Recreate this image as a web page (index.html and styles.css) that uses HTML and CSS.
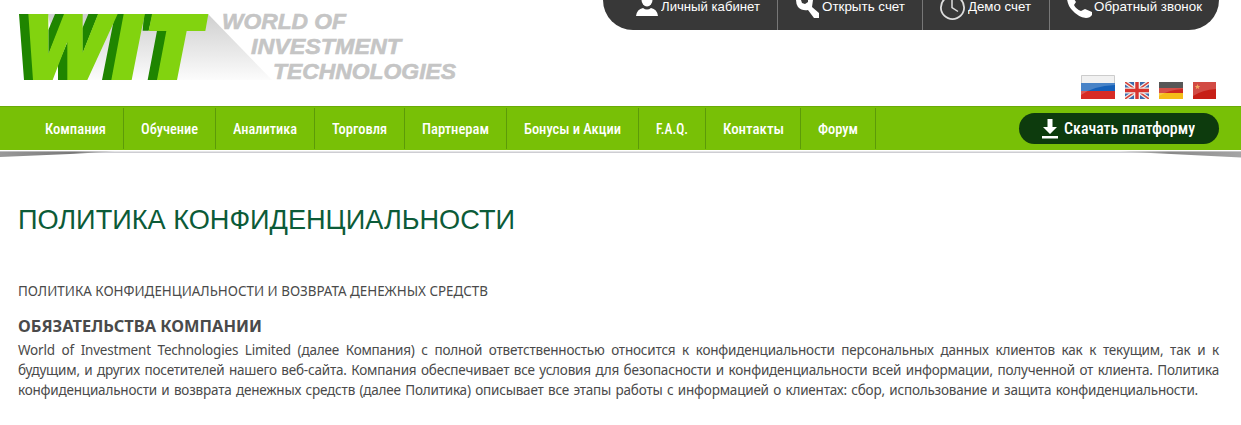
FILE: index.html
```html
<!DOCTYPE html>
<html lang="ru">
<head>
    <meta charset="UTF-8">
    <meta name="viewport" content="width=device-width, initial-scale=1.0">
    <title>World of Investment Technologies</title>
    <link rel="stylesheet" href="styles.css">
</head>
<body>

    <header class="header">
        <svg class="logo" width="460" height="90" viewBox="0 0 460 90">
            <defs>
                <linearGradient id="shade" x1="0" y1="0" x2="0" y2="1">
                    <stop offset="0" stop-color="#cfcfcf"/>
                    <stop offset="1" stop-color="#fcfcfc"/>
                </linearGradient>
            </defs>
            <path fill="url(#shade)" d="M48 14H208L272 80H60Z"/>
            <g transform="scale(.33333)">
                <path fill="#1f8500" d="M57 42H90L104 240H72ZM165 42H195L145 165V90ZM174 240H204V122L174 192ZM265 42H295L247 162V85ZM345 42H376L336 240H306ZM432 42H458L446 92H428ZM471 92H502L473 240H443Z"/>
                <path fill="#82d30f" d="M85 42H145V162L192 42H248V158L294 42H353L262 240H202V125L158 240H99ZM371 42H435L424 92L395 240H334ZM456 42H625L616 93H560L531 240H471L499 93H446Z"/>
            </g>
            <g class="slogan">
                <text x="222" y="28.800" textLength="124" lengthAdjust="spacingAndGlyphs">WORLD OF</text>
                <text x="251" y="53.800" textLength="150" lengthAdjust="spacingAndGlyphs">INVESTMENT</text>
                <text x="273" y="78.800" textLength="183" lengthAdjust="spacingAndGlyphs">TECHNOLOGIES</text>
            </g>
        </svg>

        <div class="header-right">
            <div class="topbar">
                <a class="cabinet">
                    <svg width="22" height="20" viewBox="0 0 22 20"><ellipse cx="11" cy="0" rx="5.500" ry="6.500" fill="#fff"/><path fill="#fff" d="M0 16Q1 9 7 8Q11 11 15 8Q21 9 22 16Z"/></svg>
                    <svg class="label" width="100" height="20"><text x="0" y="11" textLength="99" lengthAdjust="spacingAndGlyphs">Личный кабинет</text></svg>
                </a>
                <a class="account">
                    <svg width="24" height="20" viewBox="0 0 24 20"><path fill="#fff" d="M0 0H5L6 3L9 4L12 2V0H17L16 7L23 13V18H18L12 10Q6 11 2 7Q0 4 0 0Z"/></svg>
                    <svg class="label" width="84" height="20"><text x="0" y="11" textLength="83" lengthAdjust="spacingAndGlyphs">Открыть счет</text></svg>
                </a>
                <a class="demo">
                    <svg width="26" height="20" viewBox="0 0 26 20"><circle cx="12.500" cy="7.500" r="11.600" fill="none" stroke="#ddd" stroke-width="1.800"/><path fill="none" stroke="#ddd" stroke-width="1.500" d="M12 0V7.500L18 11.500"/></svg>
                    <svg class="label" width="64" height="20"><text x="0" y="11" textLength="63" lengthAdjust="spacingAndGlyphs">Демо счет</text></svg>
                </a>
                <a class="call">
                    <svg width="25" height="20" viewBox="0 0 25 20"><path fill="#fff" d="M0 -1H7L9 2L7 5Q9 9 14 11L18 9L25 12V15Q23 18 19 18Q11 17 5 10Q1 6 0 -1Z"/></svg>
                    <svg class="label" width="109" height="20"><text x="0" y="11" textLength="108" lengthAdjust="spacingAndGlyphs">Обратный звонок</text></svg>
                </a>
            </div>
            <div class="flags">
                <svg width="34" height="24" viewBox="0 0 34 24"><path fill="#eee" d="M0 0H34V8H0Z"/><path fill="#1560b8" d="M0 8H34V16H0Z"/><path fill="#d72b25" d="M0 16H34V24H0Z"/><path fill="#fff" opacity=".22" d="M0 0H34V10Q12 11 0 20Z"/><path fill="none" stroke="#ccc" d="M.5 8V.5H33.500V8"/></svg>
                <svg width="24" height="17" viewBox="0 0 24 17"><path fill="#3d6aac" d="M0 0H24V17H0Z"/><path stroke="#eee" stroke-width="4" d="M0 0L24 17M24 0L0 17"/><path stroke="#d8453c" stroke-width="1.500" d="M0 0L24 17M24 0L0 17"/><path stroke="#eee" stroke-width="6" d="M12 0V17M0 8.500H24"/><path stroke="#d8352f" stroke-width="3.400" d="M12 0V17M0 8.500H24"/></svg>
                <svg width="24" height="17" viewBox="0 0 24 17"><path fill="#333" d="M0 0H24V6H0Z"/><path fill="#ce2920" d="M0 6H24V11H0Z"/><path fill="#f5bd18" d="M0 11H24V17H0Z"/><path fill="#fff" opacity=".18" d="M0 0H24V7Q9 8 0 14Z"/></svg>
                <svg width="23" height="17" viewBox="0 0 23 17"><path fill="#c71f16" d="M0 0H23V17H0Z"/><path fill="#fff" opacity=".2" d="M0 0H23V7Q9 8 0 14Z"/><path fill="#f0a860" d="M4.500 2L5.300 4H7.300L5.700 5.300L6.300 7.300L4.500 6L2.700 7.300L3.300 5.300L1.700 4H3.700Z"/></svg>
            </div>
        </div>
    </header>

    <nav class="nav">
        <ul class="menu">
            <li><svg width="61" height="24"><text x="0" y="17" textLength="61" lengthAdjust="spacingAndGlyphs">Компания</text></svg></li>
            <li><svg width="58" height="24"><text x="0" y="17" textLength="57" lengthAdjust="spacingAndGlyphs">Обучение</text></svg></li>
            <li><svg width="65" height="24"><text x="0" y="17" textLength="64" lengthAdjust="spacingAndGlyphs">Аналитика</text></svg></li>
            <li><svg width="56" height="24"><text x="0" y="17" textLength="55" lengthAdjust="spacingAndGlyphs">Торговля</text></svg></li>
            <li><svg width="68" height="24"><text x="0" y="17" textLength="67" lengthAdjust="spacingAndGlyphs">Партнерам</text></svg></li>
            <li><svg width="98" height="24"><text x="0" y="17" textLength="97" lengthAdjust="spacingAndGlyphs">Бонусы и Акции</text></svg></li>
            <li><svg width="33" height="24"><text x="0" y="17" textLength="32" lengthAdjust="spacingAndGlyphs">F.A.Q.</text></svg></li>
            <li><svg width="61" height="24"><text x="0" y="17" textLength="61" lengthAdjust="spacingAndGlyphs">Контакты</text></svg></li>
            <li><svg width="41" height="24"><text x="0" y="17" textLength="40" lengthAdjust="spacingAndGlyphs">Форум</text></svg></li>
        </ul>
        <a class="download">
            <svg width="16" height="20" viewBox="0 0 16 20"><path fill="#fff" d="M5.500 0H10.500V8H15L8 15L1 8H5.500ZM0 17H16V19.500H0Z"/></svg>
            <svg width="131" height="24"><text class="download-text" x="0" y="17" textLength="131" lengthAdjust="spacingAndGlyphs">Скачать платформу</text></svg>
        </a>
    </nav>
    <svg class="nav-shadow" width="1241" height="9" viewBox="0 0 1241 9">
        <defs>
            <linearGradient id="left"><stop offset="0" stop-color="#999"/><stop offset=".65" stop-color="#777"/><stop offset="1" stop-color="#ccc"/></linearGradient>
            <linearGradient id="right"><stop offset="0" stop-color="#ccc"/><stop offset=".4" stop-color="#888"/><stop offset="1" stop-color="#a5a5a5"/></linearGradient>
        </defs>
        <path fill="#cdcdd2" d="M0 1.500H1241V3H0Z"/>
        <path fill="url(#left)" d="M0 1.500H115L70 4L0 7Z"/>
        <path fill="url(#right)" d="M1120 1.500H1241V7.500L1171 4Z"/>
    </svg>

    <main class="content">
        <h1><svg width="520" height="40"><text x="0" y="29" textLength="497" lengthAdjust="spacingAndGlyphs">ПОЛИТИКА КОНФИДЕНЦИАЛЬНОСТИ</text></svg></h1>
        <p class="lead"><svg width="474" height="20"><text x="0" y="15" textLength="470" lengthAdjust="spacingAndGlyphs">ПОЛИТИКА КОНФИДЕНЦИАЛЬНОСТИ И ВОЗВРАТА ДЕНЕЖНЫХ СРЕДСТВ</text></svg></p>
        <h2><svg width="250" height="24"><text x="0" y="18" textLength="244" lengthAdjust="spacingAndGlyphs">ОБЯЗАТЕЛЬСТВА КОМПАНИИ</text></svg></h2>
        <div class="text">
            <span>World of Investment Technologies Limited (далее Компания) с полной ответственностью относится к конфиденциальности персональных данных клиентов как к текущим, так и к</span>
            <span>будущим, и других посетителей нашего веб-сайта. Компания обеспечивает все условия для безопасности и конфиденциальности всей информации, полученной от клиента. Политика</span>
            <span class="last">конфиденциальности и возврата денежных средств (далее Политика) описывает все этапы работы с информацией о клиентах: сбор, использование и защита конфиденциальности.</span>
        </div>
    </main>

</body>
</html>
```
FILE: styles.css
```css
body {
    margin: 0;
    background-color: #fff;
    font-family: "Noto Sans", sans-serif;
    color: #4a4a4a;
}
svg {
    display: block;
    flex: none;
}
.header {
    display: flex;
    justify-content: space-between;
    height: 106px;
    padding-right: 22px;
}
.slogan {
    font: italic bold 22.5px "Liberation Sans", Arial, sans-serif;
    fill: #c5c5c5;
    stroke: #c5c5c5;
    stroke-width: 0.6px;
}
.header-right {
    display: flex;
    flex-direction: column;
    align-items: flex-end;
}
.topbar {
    box-sizing: border-box;
    display: flex;
    width: 616px;
    height: 30px;
    padding-left: 33px;
    background-color: #383838;
    border-radius: 0 0 34px 34px;
}
.topbar a {
    box-sizing: border-box;
    display: flex;
    gap: 3px;
}
.topbar .cabinet {
    width: 141px;
}
.topbar a + a {
    border-left: 1px solid #777;
}
.topbar .account {
    width: 145px;
    padding-left: 18px;
    gap: 2px;
}
.topbar .demo {
    width: 127px;
    padding-left: 17px;
    gap: 2px;
}
.topbar .call {
    padding-left: 17px;
    gap: 2px;
}
.label {
    font: 13px "Liberation Sans", Arial, sans-serif;
    fill: #fff;
}
.flags {
    display: flex;
    align-items: flex-end;
    gap: 10px;
    margin-top: 45px;
    padding-right: 3px;
}
.nav {
    box-sizing: border-box;
    display: flex;
    justify-content: space-between;
    align-items: center;
    height: 44px;
    padding: 0 22px 0 28px;
    background-color: #78c006;
    border-top: 1px solid #6aab07;
}
.menu {
    display: flex;
    margin: 0;
    padding: 0;
    list-style: none;
    font: 500 14px "Roboto Condensed", Roboto, sans-serif;
    fill: #fff;
}
.menu li {
    display: flex;
    align-items: center;
    height: 41px;
    padding: 0 16px 0 17px;
    border-right: 1px solid #5c9b08;
}
.menu li:first-child {
    padding-right: 17px;
}
.download {
    box-sizing: border-box;
    display: flex;
    align-items: center;
    gap: 6px;
    width: 200px;
    height: 31px;
    padding-left: 23px;
    background-color: #0d3b0d;
    border-radius: 16px;
}
.download-text {
    font: 500 16px "Roboto Condensed", Roboto, sans-serif;
    fill: #fff;
}
.content {
    padding: 41px 22px 0 18px;
}
h1, h2, p {
    margin: 0;
}
h1 {
    font: 28px "Liberation Sans", Arial, sans-serif;
    fill: #0c5b38;
}
.lead {
    margin-top: 41px;
    font-size: 13.5px;
    fill: #4a4a4a;
}
h2 {
    margin-top: 13px;
    font-size: 16px;
    fill: #4a4a4a;
}
.text {
    margin-top: 2px;
    font-size: 13.5px;
    line-height: 20px;
    letter-spacing: -0.2px;
}
.text span {
    display: block;
    height: 20px;
    white-space: nowrap;
    text-align-last: justify;
}
.text .last {
    width: 1180px;
}
```
